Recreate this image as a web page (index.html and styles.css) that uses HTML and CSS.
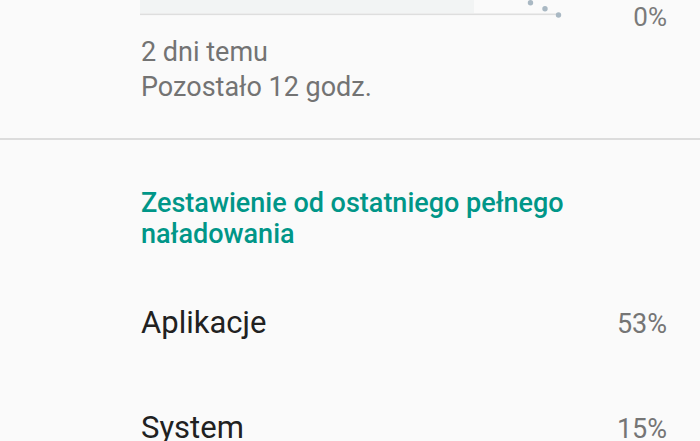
FILE: index.html
```html
<!DOCTYPE html>
<html lang="pl">
<head>
<meta charset="utf-8">
<link rel="stylesheet" href="styles.css">
</head>
<body>
<div class="screen">
  <section class="usage">
    <div class="chart-row">
      <svg class="chart" width="422" height="20" viewBox="0 0 422 20">
        <rect x="0" y="0" width="334" height="13" fill="#f2f4f4"/>
        <rect x="0" y="13.5" width="420" height="1.6" fill="#dedede"/>
        <circle cx="390.5" cy="2.8" r="2.7" fill="#a9b8c3"/>
        <circle cx="405" cy="8.8" r="2.7" fill="#a9b8c3"/>
        <circle cx="418.5" cy="15" r="2.7" fill="#a9b8c3"/>
      </svg>
      <span class="axis-label">0%</span>
    </div>
    <div class="info">
      <div class="info-line">2 dni temu</div>
      <div class="info-line">Pozostało 12 godz.</div>
    </div>
  </section>
  <section class="breakdown">
    <h2 class="heading">Zestawienie od ostatniego pełnego naładowania</h2>
    <div class="row">
      <span class="row-title">Aplikacje</span>
      <span class="row-value">53%</span>
    </div>
    <div class="row">
      <span class="row-title">System</span>
      <span class="row-value">15%</span>
    </div>
  </section>
</div>
</body>
</html>
```
FILE: styles.css
```css
html, body {
  margin: 0;
  padding: 0;
  background: #fafafa;
}
body {
  font-family: Roboto, "Noto Sans", sans-serif;
  overflow: hidden;
}
.screen {
  width: 700px;
  height: 441px;
  overflow: hidden;
}
.usage {
  border-bottom: 2px solid #dcdcdc;
  padding-bottom: 33px;
}
.chart-row {
  display: flex;
  justify-content: space-between;
  align-items: flex-start;
  height: 35px;
  padding-left: 140px;
  padding-right: 33px;
}
.chart {
  display: block;
}
.axis-label {
  margin-top: 4px;
  font-size: 26px;
  line-height: 27px;
  color: #7a7a7a;
}
.info {
  padding-left: 141px;
}
.info-line {
  font-size: 27px;
  line-height: 35px;
  color: #737373;
}
.breakdown {
  padding: 48px 33px 0 141px;
}
.heading {
  margin: 0 0 21px;
  font-size: 27px;
  font-weight: 500;
  line-height: 31px;
  color: #009688;
  width: 440px;
}
.row {
  display: flex;
  justify-content: space-between;
  align-items: baseline;
  padding: 33px 0;
  line-height: 37px;
}
.row-title {
  font-size: 31px;
  color: #212121;
}
.row-value {
  font-size: 27px;
  color: #757575;
}
```
